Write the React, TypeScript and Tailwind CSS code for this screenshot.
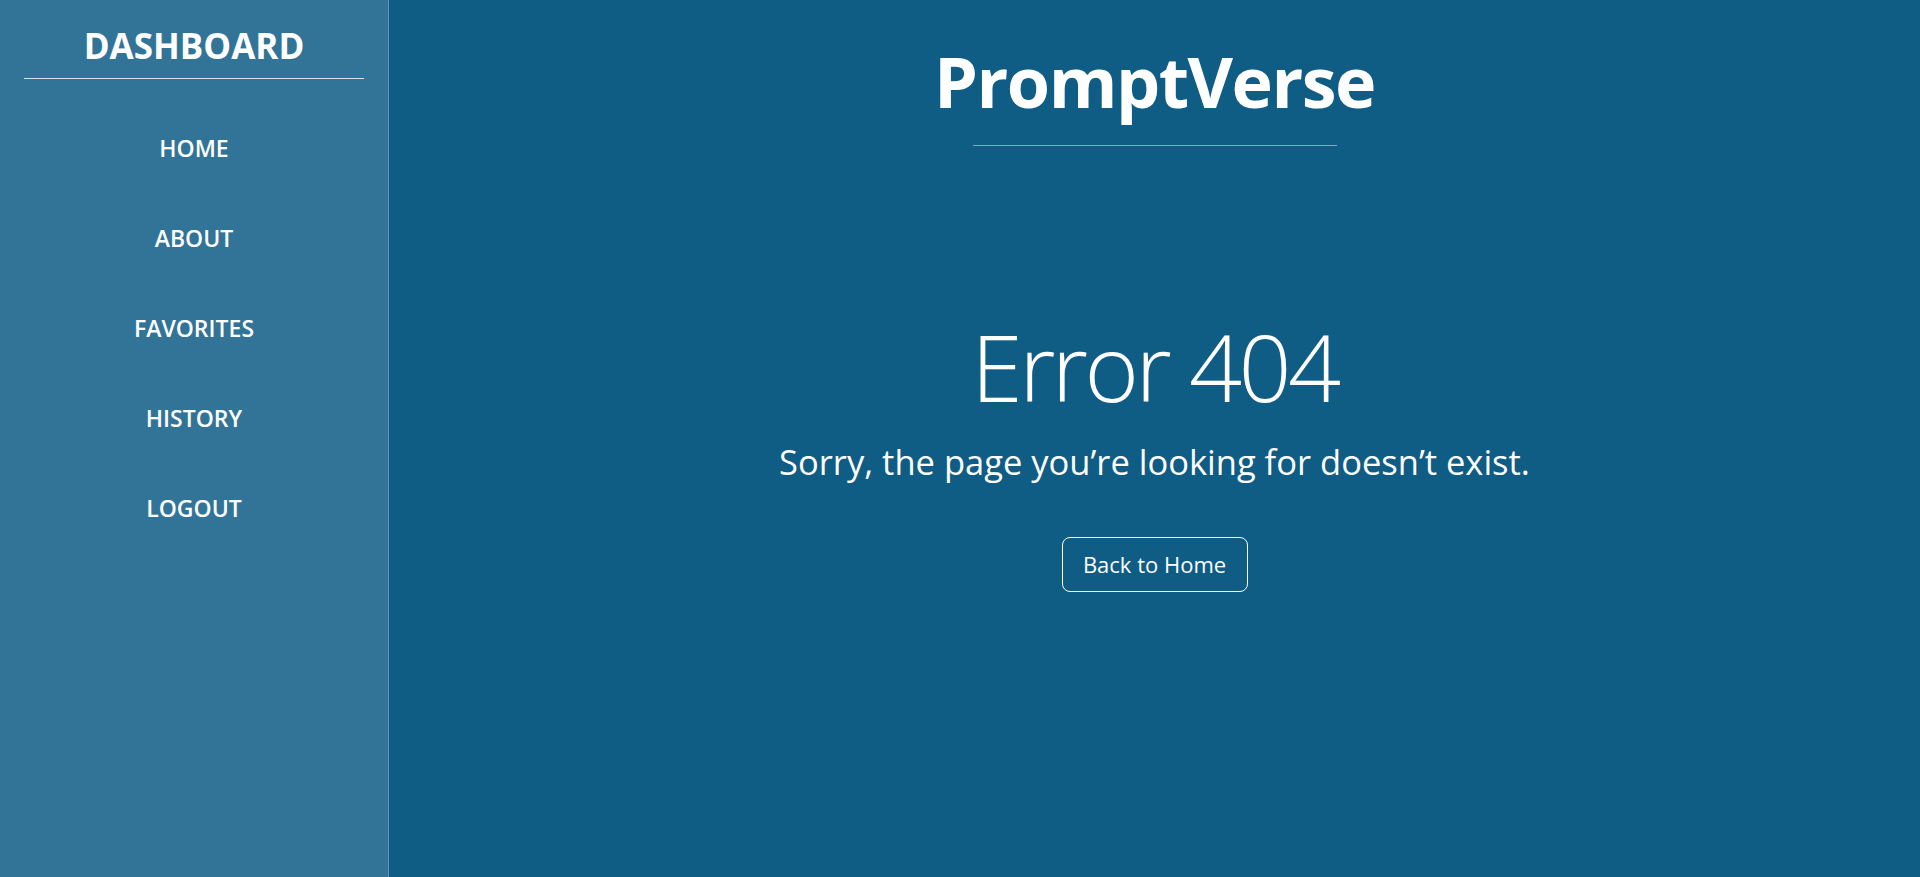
const navItems = ["HOME", "ABOUT", "FAVORITES", "HISTORY", "LOGOUT"];

export default function App() {
  return (
    <div className="flex h-screen w-full overflow-hidden bg-[#0f5c85] font-['Open_Sans','Noto_Sans',sans-serif] text-white">
      <aside className="flex w-[389px] shrink-0 flex-col border-r border-[#5d94b3] bg-[#317497] px-6">
        <h1 className="pt-[26px] pb-[12px] text-center text-[35px] leading-[40px] font-bold">DASHBOARD</h1>
        <hr className="border-t border-[#d5e3ec]" />
        <nav className="mt-[54px] flex flex-col gap-[60px]">
          {navItems.map((item) => (
            <a key={item} href="#" className="text-center text-[23px] leading-[30px] font-semibold">
              {item}
            </a>
          ))}
        </nav>
      </aside>

      <main className="flex flex-1 flex-col items-center">
        <h2 className="pt-[38px] text-[70px] leading-[86px] font-bold tracking-[-1.5px]">PromptVerse</h2>
        <hr className="mt-[21px] w-[364px] border-t border-[#7fa9c3]" />

        <div className="mt-[174px] flex flex-col items-center">
          <p className="text-[93px] leading-[93px] font-light tracking-[-3.5px]">Error 404</p>
          <p className="mt-[29px] text-[34.5px] leading-[40px]">Sorry, the page you’re looking for doesn’t exist.</p>
          <button className="mt-[55px] h-[55px] w-[186px] rounded-lg border border-white text-[22px]">
            Back to Home
          </button>
        </div>
      </main>
    </div>
  );
}
